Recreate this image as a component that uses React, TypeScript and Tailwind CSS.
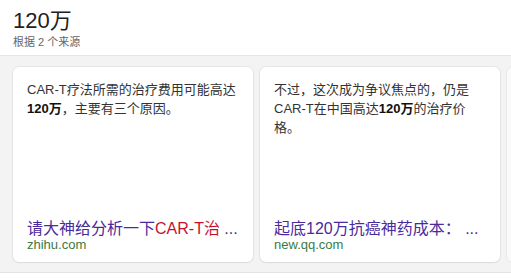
const font = { fontFamily: '"Liberation Sans", "Noto Sans CJK SC", sans-serif' };

interface Source {
    body: React.ReactNode;
    title: React.ReactNode;
    site: string;
}

const sources: Source[] = [
    {
        body: (
            <>
                CAR-T疗法所需的治疗费用可能高达<b className="font-bold text-[#111]">120万</b>，主要有三个原因。
            </>
        ),
        title: (
            <>
                请大神给分析一下<span className="text-[#c8102e]">CAR-T治</span> ...
            </>
        ),
        site: "zhihu.com",
    },
    {
        body: (
            <>
                不过，这次成为争议焦点的，仍是CAR-T在中国高达<b className="font-bold text-[#111]">120万</b>的治疗价格。
            </>
        ),
        title: <>起底120万抗癌神药成本： ...</>,
        site: "new.qq.com",
    },
];

function SourceCard({ source }: { source: Source }) {
    return (
        <div className="flex h-[195px] w-[240px] shrink-0 flex-col justify-between rounded-[6px] bg-white pl-[14px] pr-[10px] pt-[13px] pb-[10px] shadow-[0_0_0_1px_rgba(0,0,0,0.05),0_1px_2px_rgba(0,0,0,0.06)]">
            <p className="text-[13px] leading-[19px] text-[#333]">{source.body}</p>
            <div className="pr-[4px]">
                <div className="overflow-hidden whitespace-nowrap text-[16px] leading-[18px] text-[#4b2a9c]">
                    {source.title}
                </div>
                <div className="text-[13px] leading-[14px] text-[#3a7a45]">{source.site}</div>
            </div>
        </div>
    );
}

export default function App() {
    return (
        <div className="h-[279px] w-[511px] overflow-hidden bg-white" style={font}>
            <div className="border-b border-[#e5e5e5] px-[13px] pt-[7px] pb-[6px]">
                <div className="text-[22px] leading-[28px] text-[#222]">120万</div>
                <div className="text-[11px] leading-[14px] text-[#666]">根据 2 个来源</div>
            </div>
            <div className="flex gap-[7px] overflow-hidden border-b border-[#e2e2e2] bg-[#f3f3f3] px-[13px] pt-[11px] pb-[10px]">
                {sources.map((s) => (
                    <SourceCard key={s.site} source={s} />
                ))}
                <div className="h-[195px] w-[240px] shrink-0 rounded-[6px] bg-[#f9f9f9] shadow-[0_0_0_1px_rgba(0,0,0,0.04)]" />
            </div>
        </div>
    );
}
